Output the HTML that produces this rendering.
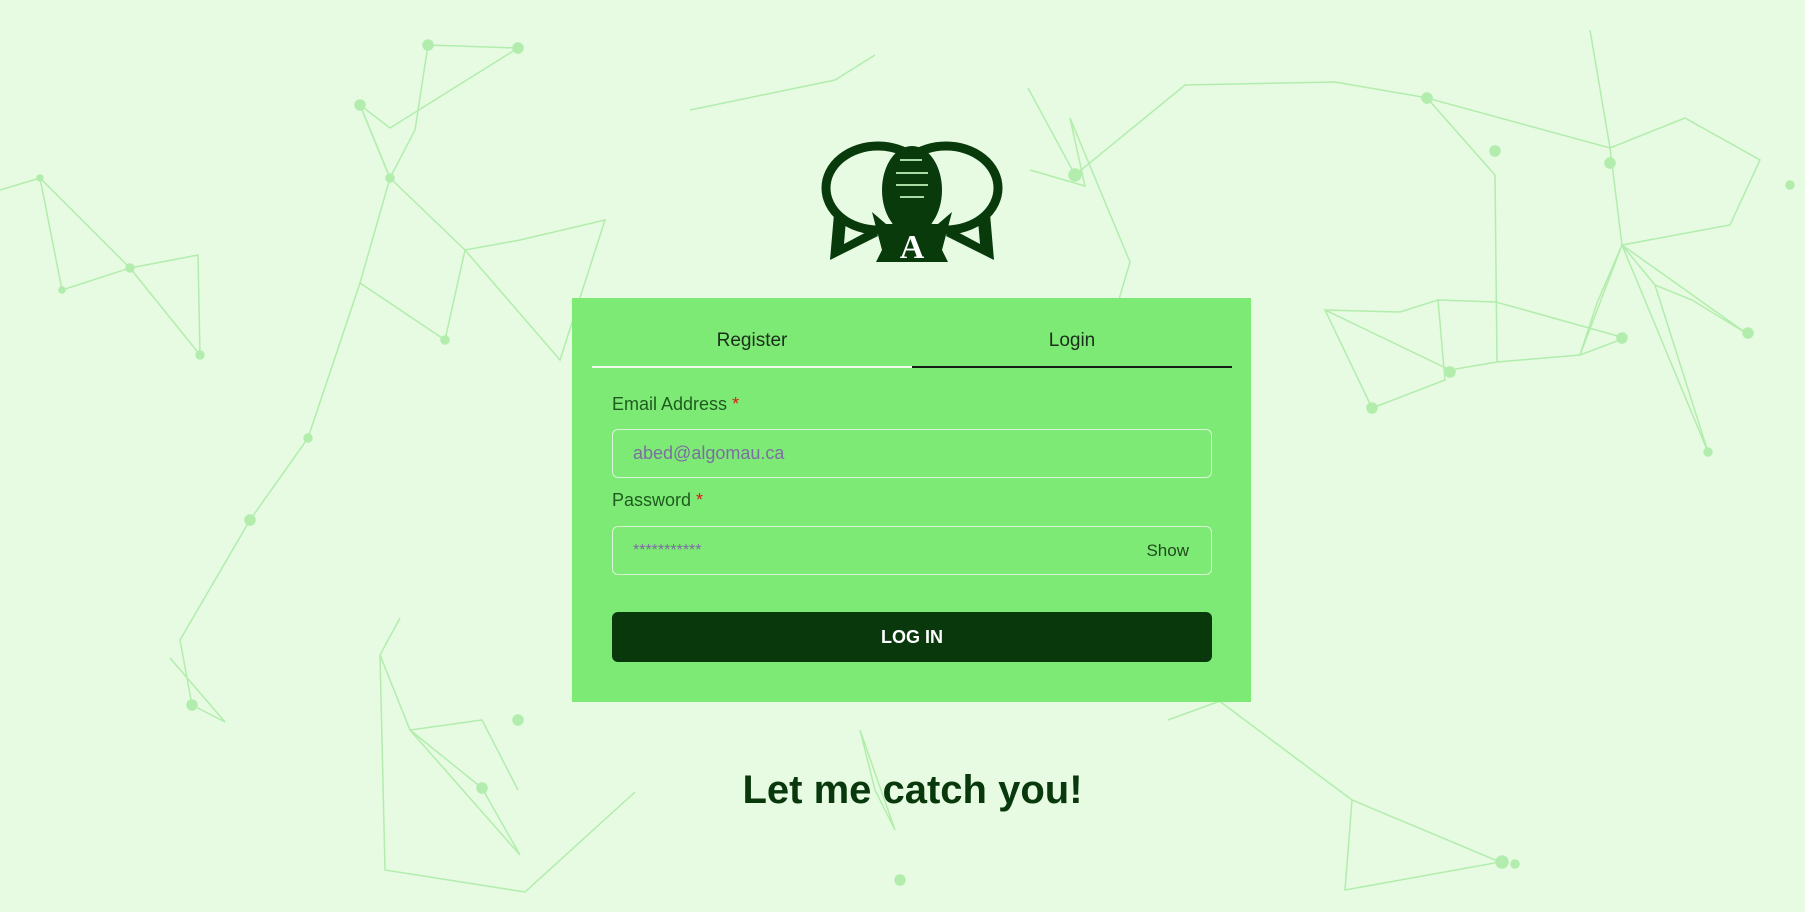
<!DOCTYPE html>
<html><head><meta charset="utf-8"><style>
html,body{margin:0;padding:0;width:1805px;height:912px;overflow:hidden;background:#e6fbe2;font-family:"Liberation Sans",sans-serif}
.bg{position:absolute;left:0;top:0}
.card{position:absolute;left:572px;top:298px;width:679px;height:404px;background:#7eea76}
.tab{position:absolute;top:32px;font-size:19px;color:#1b2e1b;width:320px;text-align:center}
.ul{position:absolute;top:68px;height:2px}
.lbl{position:absolute;left:40px;font-size:18px;color:#1e5b1e}
.lbl span{color:#e0141e}
.inp{position:absolute;left:40px;width:600px;height:49px;border:1.5px solid #d9f5d6;border-radius:6px;box-sizing:border-box}
.ph{position:absolute;left:20px;top:13px;font-size:18px;color:#7b6fa0}
.btn{position:absolute;left:40px;top:314px;width:600px;height:50px;background:#08380c;border-radius:6px;color:#fff;font-weight:bold;font-size:18px;text-align:center;line-height:50px}
.tag{position:absolute;left:0;width:1825px;top:768px;text-align:center;font-size:40px;font-weight:bold;color:#08380c}
</style></head><body>
<svg class="bg" width="1805" height="912" stroke="#a6eaa0" stroke-width="1.5" fill="#a6eaa0" opacity="0.8">
<g fill="none">
<polyline points="0,190 40,178 62,290 130,268 198,255 200,355 130,268"/>
<polyline points="40,178 130,268"/>
<polyline points="428,45 518,48 390,128 360,105 390,178 415,130 428,45"/>
<polyline points="360,105 390,178 465,250 520,240 605,220 560,360 465,250 445,340 360,283 390,178"/>
<polyline points="360,283 308,438 250,520 180,640 192,705 225,722 170,658"/>
<polyline points="400,618 380,655 410,730 482,788 520,855 410,730 482,720 518,790"/>
<polyline points="380,655 385,870 525,892 635,792"/>
<polyline points="1030,170 1085,186 1070,118 1130,262 1110,330"/>
<polyline points="1325,310 1400,312 1438,300 1445,380 1372,408 1325,310 1450,370 1497,362 1580,355 1625,338 1496,302 1438,300"/>
<polyline points="1497,362 1495,175 1427,98 1610,148 1685,118 1760,160 1730,225 1622,245 1655,285 1692,300 1746,333 1622,245 1580,355"/>
<polyline points="1590,30 1610,148 1622,245 1708,452 1655,285"/>
<polyline points="1622,245 1597,303 1580,355"/>
<polyline points="860,730 875,790 895,830 860,730"/>
<polyline points="1352,800 1345,890 1500,862 1352,800 1218,700"/>
<polyline points="690,110 835,80 875,55"/>
<polyline points="1028,88 1075,175 1185,85 1335,82 1428,98"/>
<polyline points="1168,720 1250,690 1218,700"/>
</g>
<g>
<circle cx="40" cy="178" r="3"/><circle cx="130" cy="268" r="4"/><circle cx="62" cy="290" r="3"/><circle cx="200" cy="355" r="4"/>
<circle cx="428" cy="45" r="5"/><circle cx="518" cy="48" r="5"/><circle cx="360" cy="105" r="5"/><circle cx="390" cy="178" r="4"/>
<circle cx="445" cy="340" r="4"/><circle cx="308" cy="438" r="4"/><circle cx="250" cy="520" r="5"/><circle cx="192" cy="705" r="5"/>
<circle cx="482" cy="788" r="5"/><circle cx="518" cy="720" r="5"/><circle cx="1075" cy="175" r="6"/><circle cx="1427" cy="98" r="5"/>
<circle cx="1495" cy="151" r="5"/><circle cx="1610" cy="163" r="5"/><circle cx="1748" cy="333" r="5"/><circle cx="1372" cy="408" r="5"/>
<circle cx="1450" cy="372" r="5"/><circle cx="1622" cy="338" r="5"/><circle cx="1502" cy="862" r="6"/><circle cx="1515" cy="864" r="4"/>
<circle cx="900" cy="880" r="5"/><circle cx="1708" cy="452" r="4"/><circle cx="1790" cy="185" r="4"/>
</g>
</svg>
<svg style="position:absolute;left:816px;top:140px" width="192" height="124" viewBox="0 0 192 124">
<g fill="none" stroke="#083a0c" stroke-width="9">
<ellipse cx="62" cy="48" rx="52" ry="42"/>
<ellipse cx="130" cy="48" rx="52" ry="42"/>
</g>
<path d="M18,74 L30,80 L28,104 L58,88 L62,96 L14,120 Z" fill="#083a0c"/>
<path d="M174,74 L162,80 L164,104 L134,88 L130,96 L178,120 Z" fill="#083a0c"/>
<ellipse cx="96" cy="50" rx="30" ry="44" fill="#083a0c"/>
<g stroke="#a8dca4" stroke-width="2"><line x1="84" y1="20" x2="106" y2="20"/><line x1="80" y1="33" x2="112" y2="33"/><line x1="80" y1="45" x2="112" y2="45"/><line x1="84" y1="57" x2="108" y2="57"/></g>
<path d="M56,72 L70,84 L122,84 L136,72 L126,110 L132,122 L60,122 L66,110 Z" fill="#083a0c"/>
<text x="96" y="118" text-anchor="middle" font-family="Liberation Serif,serif" font-weight="bold" font-size="34" fill="#fff">A</text>
</svg>
<div class="card">
<div class="tab" style="left:20px">Register</div>
<div class="tab" style="left:340px">Login</div>
<div class="ul" style="left:20px;width:320px;background:#f0fbee"></div>
<div class="ul" style="left:340px;width:320px;background:#151f15"></div>
<div class="lbl" style="top:96px">Email Address <span>*</span></div>
<div class="inp" style="top:131px"><div class="ph">abed@algomau.ca</div></div>
<div class="lbl" style="top:192px">Password <span>*</span></div>
<div class="inp" style="top:228px"><div class="ph" style="font-size:16px;top:15px">***********</div><div style="position:absolute;right:22px;top:14px;font-size:17px;color:#1e4a1e">Show</div></div>
<div class="btn">LOG IN</div>
</div>
<div class="tag">Let me catch you!</div>
</body></html>
